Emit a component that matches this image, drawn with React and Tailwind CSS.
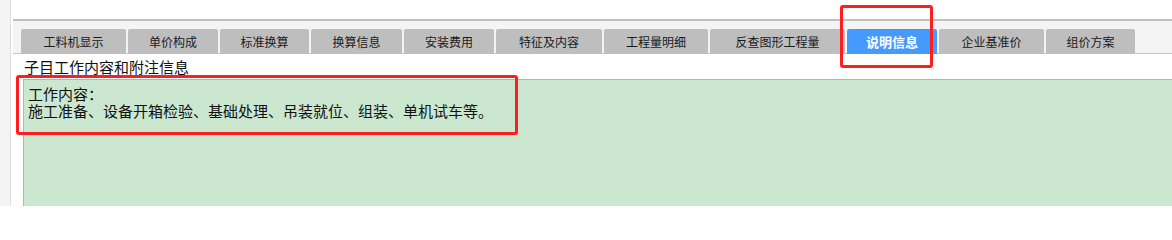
import React from "react";

const tabs = [
  { label: "工料机显示", w: "w-[105px]" },
  { label: "单价构成", w: "w-[90px]" },
  { label: "标准换算", w: "w-[89px]" },
  { label: "换算信息", w: "w-[91px]" },
  { label: "安装费用", w: "w-[90px]" },
  { label: "特征及内容", w: "w-[106px]" },
  { label: "工程量明细", w: "w-[104px]" },
  { label: "反查图形工程量", w: "w-[135px]" },
  { label: "说明信息", w: "w-[90px]", active: true },
  { label: "企业基准价", w: "w-[105px]" },
  { label: "组价方案", w: "w-[89px]" },
];

const App = () => {
  return (
    <div className="relative w-[1172px] h-[206px] flex bg-white overflow-hidden font-['Noto_Sans_CJK_SC','Liberation_Sans',sans-serif] text-[#111]">
      <div className="w-[11px] shrink-0 bg-[#f4f4f4] border-r border-[#dcdcdc]" />
      <div className="flex-1 flex flex-col pl-[2px]">
        <div className="h-[19px]" />
        <div className="h-[35px] bg-[#f4f4f4] border-t-2 border-b border-t-[#c0c0c0] border-b-[#c8c8c8] pt-[8px] pl-[8px] flex gap-[2px]">
          {tabs.map((t) =>
            t.active ? (
              <div
                key={t.label}
                className={`${t.w} h-[25px] -mb-[1px] relative rounded-t-[2px] bg-[#4599ff] text-white font-bold text-[13px] flex items-center justify-center`}
              >
                {t.label}
              </div>
            ) : (
              <div
                key={t.label}
                className={`${t.w} h-[25px] -mb-[1px] relative rounded-t-[2px] bg-[#bebebe] text-[#1a1a1a] text-[12px] flex items-center justify-center`}
              >
                {t.label}
              </div>
            )
          )}
        </div>
        <div className="h-[25px] pl-[11px] text-[15px] leading-[25px]">
          子目工作内容和附注信息
        </div>
        <div className="ml-[10px] flex-1 border-t border-l border-[#b4b4b4] bg-[#cce7d0] pl-[4px] pt-[5px] text-[15px] leading-[17px]">
          <div>工作内容：</div>
          <div>施工准备、设备开箱检验、基础处理、吊装就位、组装、单机试车等。</div>
        </div>
      </div>

      <div className="absolute left-[16px] top-[75px] w-[502px] h-[60px] border-[3px] border-[#ff1e1e] rounded-[3px]" />
      <div className="absolute left-[840px] top-[5px] w-[93px] h-[63px] border-[3px] border-[#ff1e1e] rounded-[3px]" />
    </div>
  );
};

export default App;
